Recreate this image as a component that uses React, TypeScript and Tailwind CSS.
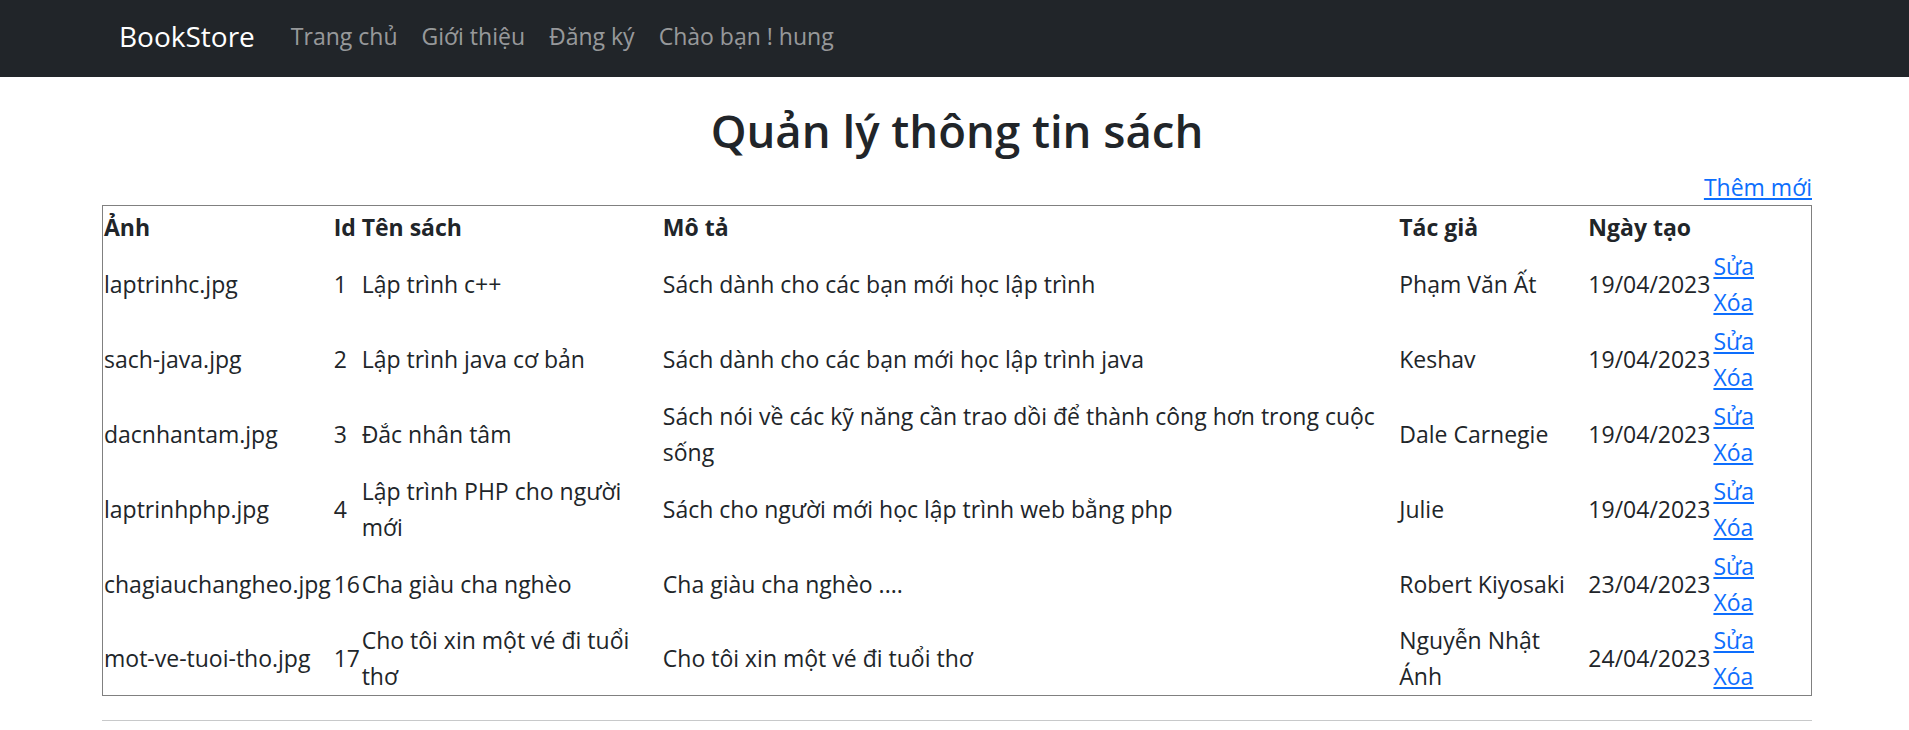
import React from "react";

type Book = {
  img: string;
  id: string;
  name: string[];
  desc: string[];
  author: string[];
  date: string;
};

const books: Book[] = [
  {
    img: "laptrinhc.jpg",
    id: "1",
    name: ["Lập trình c++"],
    desc: ["Sách dành cho các bạn mới học lập trình"],
    author: ["Phạm Văn Ất"],
    date: "19/04/2023",
  },
  {
    img: "sach-java.jpg",
    id: "2",
    name: ["Lập trình java cơ bản"],
    desc: ["Sách dành cho các bạn mới học lập trình java"],
    author: ["Keshav"],
    date: "19/04/2023",
  },
  {
    img: "dacnhantam.jpg",
    id: "3",
    name: ["Đắc nhân tâm"],
    desc: [
      "Sách nói về các kỹ năng cần trao dồi để thành công hơn trong cuộc",
      "sống",
    ],
    author: ["Dale Carnegie"],
    date: "19/04/2023",
  },
  {
    img: "laptrinhphp.jpg",
    id: "4",
    name: ["Lập trình PHP cho người", "mới"],
    desc: ["Sách cho người mới học lập trình web bằng php"],
    author: ["Julie"],
    date: "19/04/2023",
  },
  {
    img: "chagiauchangheo.jpg",
    id: "16",
    name: ["Cha giàu cha nghèo"],
    desc: ["Cha giàu cha nghèo ...."],
    author: ["Robert Kiyosaki"],
    date: "23/04/2023",
  },
  {
    img: "mot-ve-tuoi-tho.jpg",
    id: "17",
    name: ["Cho tôi xin một vé đi tuổi", "thơ"],
    desc: ["Cho tôi xin một vé đi tuổi thơ"],
    author: ["Nguyễn Nhật", "Ánh"],
    date: "24/04/2023",
  },
];

function Lines({ lines }: { lines: string[] }) {
  return (
    <>
      {lines.map((l, i) => (
        <React.Fragment key={i}>
          {i > 0 && <br />}
          {l}
        </React.Fragment>
      ))}
    </>
  );
}

const td = "align-middle whitespace-nowrap px-[1px] pt-[2px] pb-0 text-left font-normal";
const th = "align-top whitespace-nowrap px-[1px] pt-[3px] pb-0 text-left font-bold";

export default function App() {
  return (
    <div className="min-h-[730px] bg-white font-['Open_Sans',sans-serif] text-[23px] leading-[36px] text-[#212529]">
      <nav className="h-[77px] bg-[#212529]">
        <div className="ml-[102px] flex h-full w-[1710px] items-center pb-[6px] pl-[17px]">
          <a href="#" className="mr-[24px] text-[28px] leading-[42px] text-white no-underline">
            BookStore
          </a>
          {["Trang chủ", "Giới thiệu", "Đăng ký", "Chào bạn ! hung"].map((t) => (
            <a
              key={t}
              href="#"
              className="px-[12px] text-[23px] leading-[36px] text-[rgba(255,255,255,0.55)] no-underline"
            >
              {t}
            </a>
          ))}
        </div>
      </nav>

      <main className="ml-[102px] w-[1710px]">
        <h2 className="mt-[24px] text-center text-[45.5px] font-semibold leading-[58px]">
          Quản lý thông tin sách
        </h2>
        <div className="mt-[10px] text-right">
          <a href="#" className="text-[#0d6efd] underline">
            Thêm mới
          </a>
        </div>

        <table className="w-full table-fixed border-collapse border border-[#808080]">
          <colgroup>
            <col className="w-[230px]" />
            <col className="w-[28px]" />
            <col className="w-[301px]" />
            <col className="w-[736px]" />
            <col className="w-[189px]" />
            <col className="w-[125px]" />
            <col className="w-[99px]" />
          </colgroup>
          <thead>
            <tr className="h-[39px]">
              <th className={th}>Ảnh</th>
              <th className={th}>Id</th>
              <th className={th}>Tên sách</th>
              <th className={th}>Mô tả</th>
              <th className={th}>Tác giả</th>
              <th className={th}>Ngày tạo</th>
              <th className={th}></th>
            </tr>
          </thead>
          <tbody>
            {books.map((b) => (
              <tr key={b.id} className="h-[75px]">
                <td className={td}>{b.img}</td>
                <td className={td}>{b.id}</td>
                <td className={td}>
                  <Lines lines={b.name} />
                </td>
                <td className={td}>
                  <Lines lines={b.desc} />
                </td>
                <td className={td}>
                  <Lines lines={b.author} />
                </td>
                <td className={td}>{b.date}</td>
                <td className={td}>
                  <a href="#" className="text-[#0d6efd] underline">
                    Sửa
                  </a>
                  <br />
                  <a href="#" className="text-[#0d6efd] underline">
                    Xóa
                  </a>
                </td>
              </tr>
            ))}
          </tbody>
        </table>

        <div className="mt-[24px] h-px bg-[#c8c9ca]" />
      </main>
    </div>
  );
}
